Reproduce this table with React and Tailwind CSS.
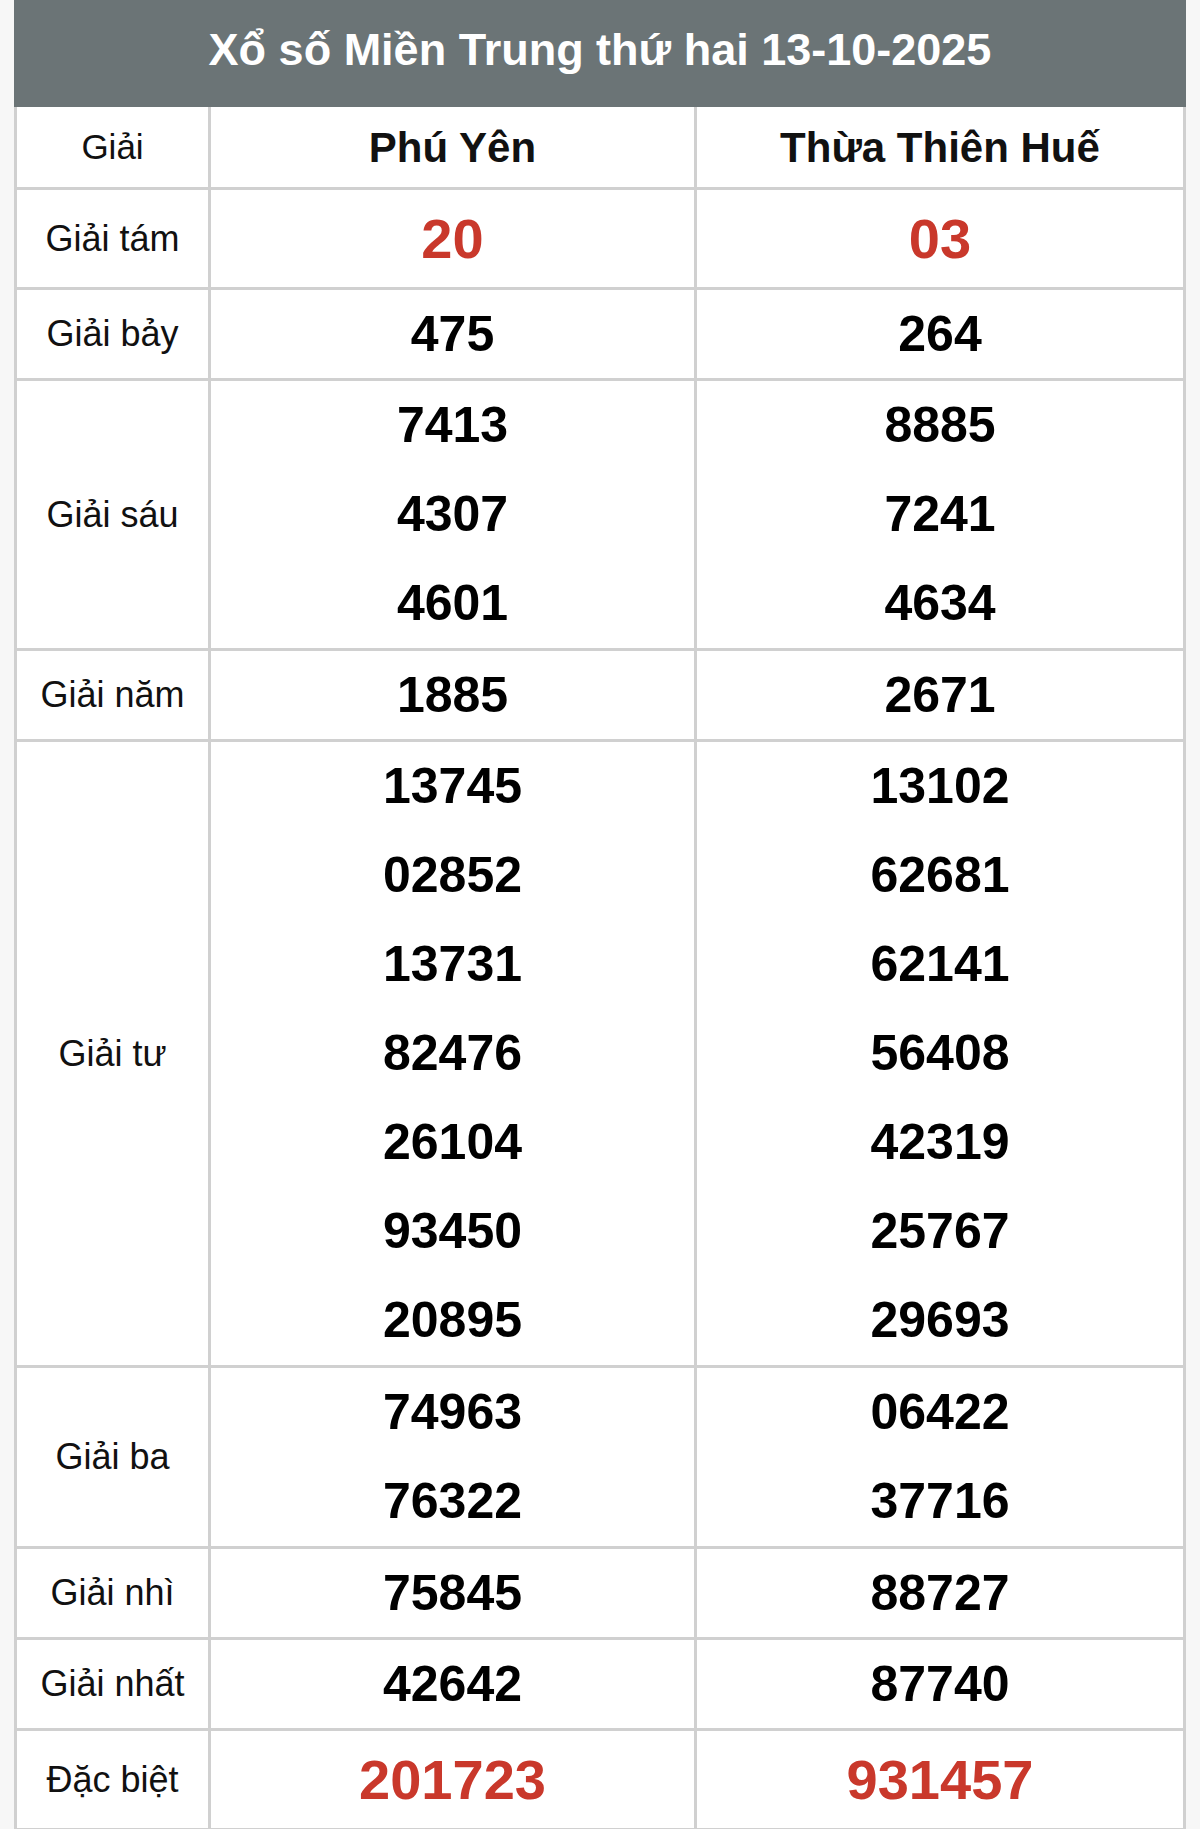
import React from "react";

// Kết quả xổ số Miền Trung, thứ hai 13-10-2025
const provinces = ["Phú Yên", "Thừa Thiên Huế"];

const prizes = [
    { name: "Giải tám", nums: [["20"], ["03"]], red: true },
    { name: "Giải bảy", nums: [["475"], ["264"]] },
    { name: "Giải sáu", nums: [["7413", "4307", "4601"], ["8885", "7241", "4634"]] },
    { name: "Giải năm", nums: [["1885"], ["2671"]] },
    {
        name: "Giải tư",
        nums: [
            ["13745", "02852", "13731", "82476", "26104", "93450", "20895"],
            ["13102", "62681", "62141", "56408", "42319", "25767", "29693"],
        ],
    },
    { name: "Giải ba", nums: [["74963", "76322"], ["06422", "37716"]] },
    { name: "Giải nhì", nums: [["75845"], ["88727"]] },
    { name: "Giải nhất", nums: [["42642"], ["87740"]] },
    { name: "Đặc biệt", nums: [["201723"], ["931457"]], red: true },
];

function NumberCell({ list, red }) {
    return (
        <div className="flex flex-col border-l-[3px] border-[#d0d0d0]">
            {list.map((n) => (
                <div
                    key={n}
                    className={
                        red
                            ? "h-[97px] flex items-center justify-center text-[56px] font-bold text-[#c9382b]"
                            : list.length > 1
                            ? "h-[89px] flex items-center justify-center text-[50px] font-bold text-black"
                            : "h-[88px] flex items-center justify-center text-[50px] font-bold text-black"
                    }
                >
                    {n}
                </div>
            ))}
        </div>
    );
}

export default function App() {
    return (
        <div
            className="min-h-screen bg-[#f7f7f7] px-[14px]"
            style={{ fontFamily: '"Liberation Sans", Arial, sans-serif' }}
        >
            {/* Tiêu đề */}
            <div className="h-[107px] bg-[#6b7476] flex items-center justify-center pb-[7px] text-white font-bold text-[45px]">
                Xổ số Miền Trung thứ hai 13-10-2025
            </div>

            {/* Bảng kết quả */}
            <div className="bg-white border-x-[3px] border-[#d0d0d0]">
                <div className="grid grid-cols-[191px_486px_1fr] h-[83px] border-b-[3px] border-[#d0d0d0]">
                    <div className="flex items-center justify-center text-[35px] text-[#111]">Giải</div>
                    {provinces.map((p) => (
                        <div
                            key={p}
                            className="flex items-center justify-center border-l-[3px] border-[#d0d0d0] text-[42px] font-bold text-[#111]"
                        >
                            {p}
                        </div>
                    ))}
                </div>

                {prizes.map((prize) => (
                    <div
                        key={prize.name}
                        className="grid grid-cols-[191px_486px_1fr] border-b-[3px] border-[#d0d0d0]"
                    >
                        <div className="flex items-center justify-center text-[36px] text-[#111]">
                            {prize.name}
                        </div>
                        {prize.nums.map((list, i) => (
                            <NumberCell key={i} list={list} red={prize.red} />
                        ))}
                    </div>
                ))}
            </div>
        </div>
    );
}
